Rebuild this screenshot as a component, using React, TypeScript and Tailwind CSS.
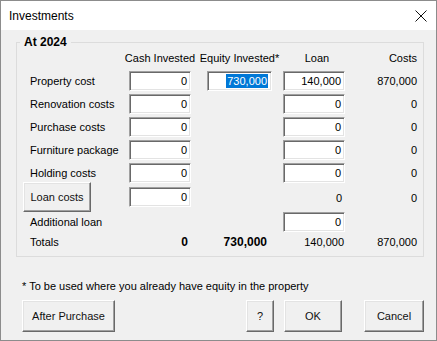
import React from "react";

type Row = {
  label: string;
  cash: string;
  equity?: string;
  loan: string;
  costs: string;
};

const rows: Row[] = [
  { label: "Property cost", cash: "0", equity: "730,000", loan: "140,000", costs: "870,000" },
  { label: "Renovation costs", cash: "0", loan: "0", costs: "0" },
  { label: "Purchase costs", cash: "0", loan: "0", costs: "0" },
  { label: "Furniture package", cash: "0", loan: "0", costs: "0" },
  { label: "Holding costs", cash: "0", loan: "0", costs: "0" },
];

const font = "font-['Liberation_Sans',Arial,sans-serif]";

function Field({ value, w = "w-[62px]", selected = false }: { value: string; w?: string; selected?: boolean }) {
  return (
    <div
      className={`${w} h-[20px] bg-white border border-t-[#a0a0a0] border-l-[#a0a0a0] border-r-white border-b-white shadow-[inset_1px_1px_0_#696969,inset_-1px_-1px_0_#e3e3e3] flex items-center justify-end pr-[3px] text-[11px] leading-[14px]`}
    >
      {selected ? <span className="bg-[#0078d7] text-white px-[1px]">{value}</span> : value}
    </div>
  );
}

function WinButton({ children, className = "" }: { children: React.ReactNode; className?: string }) {
  return (
    <button
      className={`bg-[#f0f0f0] border border-t-white border-l-white border-r-[#696969] border-b-[#696969] shadow-[inset_-1px_-1px_0_#a0a0a0,inset_1px_1px_0_#e3e3e3] text-[11px] text-[#111] flex items-center justify-center ${className}`}
    >
      {children}
    </button>
  );
}

export default function App() {
  return (
    <div className={`w-[437px] h-[341px] bg-[#f0f0f0] border border-[#8c8c8c] flex flex-col text-black ${font}`}>
      {/* title bar */}
      <div className="h-[29px] bg-white flex items-center justify-between pl-[8px] pr-[9px] shrink-0">
        <span className="text-[12px] mt-[1px]">Investments</span>
        <svg width="12" height="12" viewBox="0 0 12 12" className="mt-[1px]">
          <path d="M0.5 0.5 L11.5 11.5 M11.5 0.5 L0.5 11.5" stroke="#111" strokeWidth="1" />
        </svg>
      </div>

      {/* group box */}
      <div className="relative mt-[12px] ml-[15px] w-[408px] border border-[#dcdcdc] pl-[6px] pt-[5px] pb-[4px]">
        <div className="absolute left-[3px] top-[-9px] bg-[#f0f0f0] px-[4px] text-[12px] font-bold leading-[16px]">
          At 2024
        </div>

        {/* headers */}
        <div className="flex h-[20px] items-center text-[11px] whitespace-nowrap">
          <div className="w-[106px]" />
          <div className="w-[62px] flex justify-center">Cash Invested</div>
          <div className="w-[16px]" />
          <div className="w-[65px] flex justify-center">Equity Invested*</div>
          <div className="w-[11px]" />
          <div className="w-[62px] flex justify-center pl-[6px]">Loan</div>
          <div className="w-[72px] text-right">Costs</div>
        </div>

        <div className="flex flex-col gap-[3px] mt-[3px]">
          {rows.map((r) => (
            <div key={r.label} className="flex h-[20px] items-center text-[11px]">
              <div className="w-[106px] pl-[7px] whitespace-nowrap">{r.label}</div>
              <Field value={r.cash} />
              <div className="w-[16px]" />
              <div className="w-[65px]">{r.equity && <Field value={r.equity} w="w-[65px]" selected />}</div>
              <div className="w-[11px]" />
              <Field value={r.loan} />
              <div className="w-[72px] text-right">{r.costs}</div>
            </div>
          ))}
        </div>

        {/* loan costs */}
        <div className="flex h-[30px] items-center text-[11px] mt-[-1px]">
          <div className="w-[106px]">
            <WinButton className="w-[68px] h-[30px]">Loan costs</WinButton>
          </div>
          <Field value="0" />
          <div className="w-[16px]" />
          <div className="w-[65px]" />
          <div className="w-[11px]" />
          <div className="w-[62px] text-right pr-[3px] mt-[2px]">0</div>
          <div className="w-[72px] text-right mt-[2px]">0</div>
        </div>

        {/* additional loan */}
        <div className="flex h-[20px] items-center text-[11px]">
          <div className="w-[106px] pl-[7px]">Additional loan</div>
          <div className="w-[62px]" />
          <div className="w-[16px]" />
          <div className="w-[65px]" />
          <div className="w-[11px]" />
          <Field value="0" />
          <div className="w-[72px]" />
        </div>

        {/* totals */}
        <div className="flex h-[20px] items-center text-[11px]">
          <div className="w-[106px] pl-[7px]">Totals</div>
          <div className="w-[62px] text-right pr-[3px] font-bold text-[12px]">0</div>
          <div className="w-[16px]" />
          <div className="w-[65px] text-right pr-[5px] font-bold text-[12px]">730,000</div>
          <div className="w-[11px]" />
          <div className="w-[62px] text-right pr-[1px]">140,000</div>
          <div className="w-[72px] text-right">870,000</div>
        </div>
      </div>

      <div className="mt-[22px] ml-[21px] h-[14px] text-[11px] leading-[14px]">
        * To be used where you already have equity in the property
      </div>

      <div className="flex mt-[7px] ml-[21px] mr-[12px] h-[32px]">
        <WinButton className="w-[93px] h-[32px]">After Purchase</WinButton>
        <div className="flex-1" />
        <WinButton className="w-[28px] h-[32px]">?</WinButton>
        <WinButton className="w-[58px] h-[32px] ml-[10px]">OK</WinButton>
        <WinButton className="w-[60px] h-[32px] ml-[22px]">Cancel</WinButton>
      </div>
    </div>
  );
}
